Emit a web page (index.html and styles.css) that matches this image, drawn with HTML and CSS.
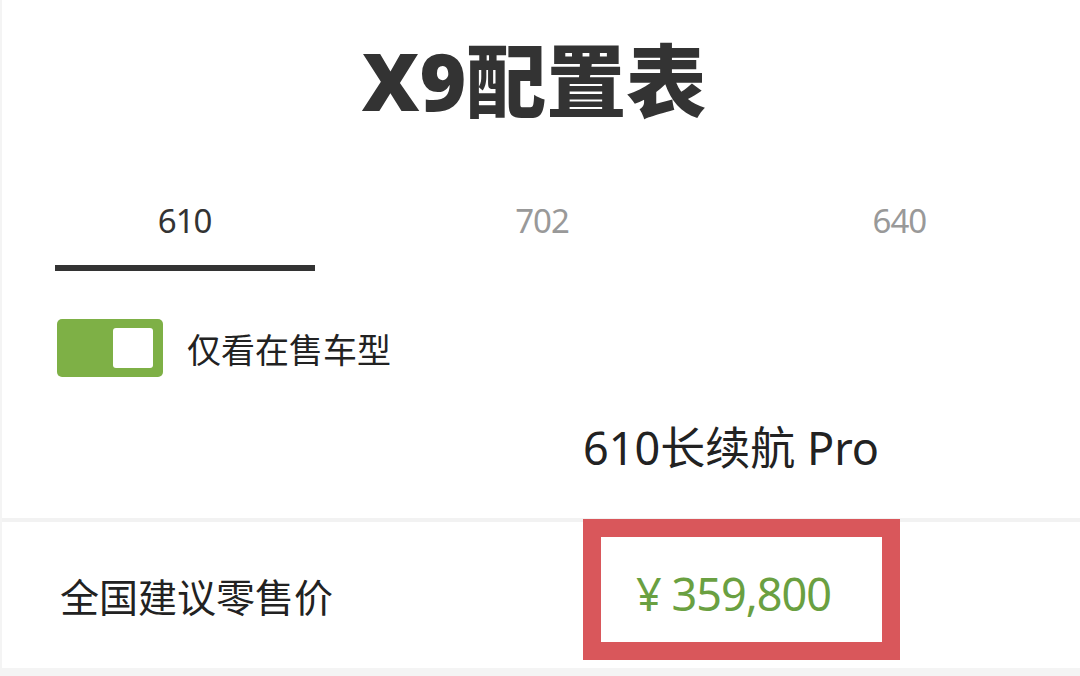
FILE: index.html
```html
<!DOCTYPE html>
<html>
    <head>
        <title>X9配置表</title>
        <link rel="stylesheet" href="styles.css">
    </head>
    <body>
        <div class="page">
            <div class="title">X9配置表</div>

            <div class="tabs">
                <div class="tab active">
                    <div class="tab-label">610</div>
                    <div class="tab-bar"></div>
                </div>
                <div class="tab">
                    <div class="tab-label">702</div>
                </div>
                <div class="tab">
                    <div class="tab-label">640</div>
                </div>
            </div>

            <div class="filter">
                <div class="switch">
                    <div class="knob"></div>
                </div>
                <div class="filter-text">仅看在售车型</div>
            </div>

            <div class="row model-row">
                <div class="cell-label"></div>
                <div class="cell-value model-name">610长续航 Pro</div>
            </div>

            <div class="row price-row">
                <div class="cell-label">全国建议零售价</div>
                <div class="cell-value">
                    <div class="price-box">
                        <span class="price">¥ 359,800</span>
                    </div>
                </div>
            </div>
        </div>
    </body>
</html>
```

FILE: styles.css
```css
body {
    margin: 0;
    background: #f4f4f4;
    font-family: "Noto Sans", "Noto Sans CJK SC", sans-serif;
    color: #222;
}
.page {
    background: white;
    border-left: 2px solid #f4f4f4;
    height: 668px;
}
.title {
    height: 160px;
    line-height: 160px;
    text-align: center;
    font-size: 80px;
    font-weight: 900;
    color: #333;
    padding-right: 14px;
    margin-bottom: 8px;
}
.tabs {
    display: grid;
    grid-template-columns: 1fr 1fr 1fr;
    padding: 28px 2px 0 4px;
}
.tab {
    display: flex;
    flex-direction: column;
    align-items: center;
}
.tab-label {
    height: 50px;
    line-height: 50px;
    font-size: 33px;
    color: #999;
    letter-spacing: -1px;
}
.tab.active .tab-label {
    color: #333;
}
.tab-bar {
    width: 260px;
    height: 6px;
    margin-top: 19px;
    background: #333;
}
.filter {
    display: flex;
    align-items: center;
    gap: 24px;
    margin-top: 48px;
    padding-left: 55px;
}
.switch {
    width: 106px;
    height: 58px;
    border-radius: 5px;
    background: #7eb046;
    display: flex;
    justify-content: flex-end;
    align-items: center;
    padding-right: 10px;
    box-sizing: border-box;
}
.knob {
    width: 40px;
    height: 40px;
    border-radius: 3px;
    background: white;
}
.filter-text {
    font-size: 34px;
    color: #222;
}
.row {
    display: grid;
    grid-template-columns: 581px 1fr;
}
.model-row {
    height: 145px;
    border-bottom: 4px solid #f2f2f2;
    box-sizing: border-box;
    align-items: center;
}
.model-name {
    font-size: 45px;
    color: #222;
    padding-bottom: 4px;
}
.price-row {
    height: 146px;
}
.cell-label {
    align-self: center;
    padding-left: 58px;
    font-size: 39px;
    color: #222;
}
.price-box {
    width: 317px;
    height: 141px;
    margin-top: -3px;
    border: 18px solid #d9575b;
    box-sizing: border-box;
    display: flex;
    align-items: center;
    padding-left: 35px;
}
.price {
    font-size: 45px;
    color: #6aa041;
    letter-spacing: -1px;
    padding-top: 8px;
}
```
